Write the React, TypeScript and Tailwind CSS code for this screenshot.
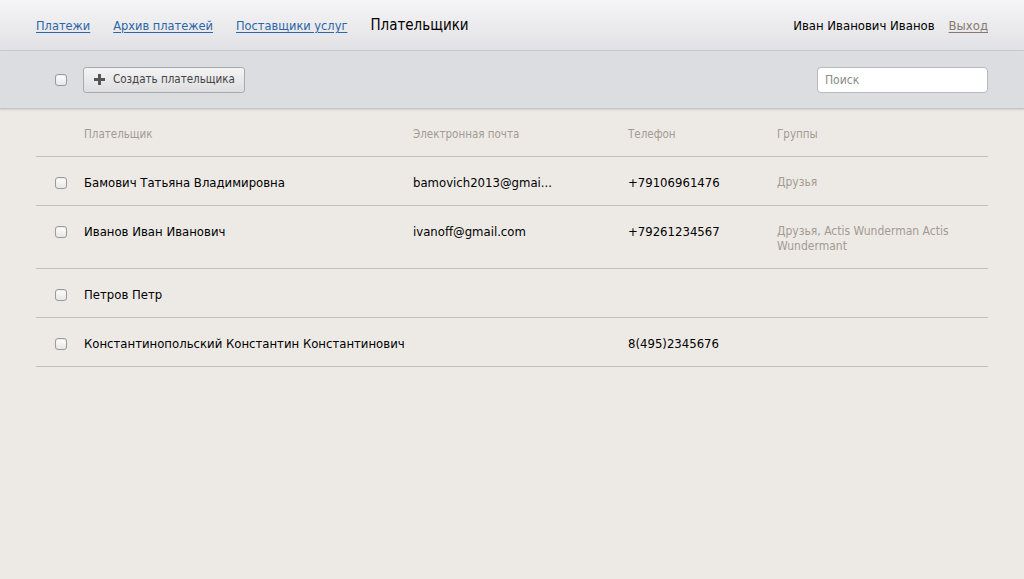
import React from 'react';

type Payer = {
  id: number;
  name: string;
  email: string;
  phone: string;
  groups: string;
};

const payers: Payer[] = [
  { id: 1, name: 'Бамович Татьяна Владимировна', email: 'bamovich2013@gmai...', phone: '+79106961476', groups: 'Друзья' },
  { id: 2, name: 'Иванов Иван Иванович', email: 'ivanoff@gmail.com', phone: '+79261234567', groups: 'Друзья, Actis Wunderman Actis Wundermant' },
  { id: 3, name: 'Петров Петр', email: '', phone: '', groups: '' },
  { id: 4, name: 'Константинопольский Константин Константинович', email: '', phone: '8(495)2345676', groups: '' },
];

function Checkbox() {
  return (
    <span className="block w-[12px] h-[12px] rounded-[3px] border border-[#9a9a9a] bg-gradient-to-b from-white to-[#e6e6e6] shadow-[inset_0_1px_1px_rgba(0,0,0,0.08)]" />
  );
}

export default function App() {
  return (
    <div className="min-h-[579px] bg-[#edeae6] font-['DejaVu_Sans_Condensed','DejaVu_Sans',sans-serif] text-[13px] text-black">
      {/* top nav */}
      <div className="h-[51px] border-b border-[#c9c9cd] bg-gradient-to-b from-[#f5f5f7] to-[#e2e2e6] px-[36px] pt-[1px] flex items-center justify-between">
        <nav className="flex items-center gap-[23px] text-[12.7px]">
          <a className="text-[#2b67a6] underline underline-offset-2">Платежи</a>
          <a className="text-[#2b67a6] underline underline-offset-2">Архив платежей</a>
          <a className="text-[#2b67a6] underline underline-offset-2">Поставщики услуг</a>
          <span className="text-[15px] text-black">Плательщики</span>
        </nav>
        <div className="flex items-center gap-[14px] text-[13px]">
          <span>Иван Иванович Иванов</span>
          <a className="text-[#867a70] underline underline-offset-2">Выход</a>
        </div>
      </div>

      {/* toolbar */}
      <div className="h-[58px] bg-[#dcdde1] border-b border-[#c4c4c8] shadow-[0_1px_2px_rgba(0,0,0,0.12)] pl-[55px] pr-[36px] flex items-center">
        <Checkbox />
        <button className="ml-[16px] h-[26px] w-[162px] pl-[10px] flex items-center gap-[8px] rounded-[3px] border border-[#a9a9ad] bg-gradient-to-b from-[#f4f4f5] to-[#dedee0] text-[11.5px] text-[#444]">
          <svg width="11" height="11" viewBox="0 0 11 11">
            <path d="M4 0h3v4h4v3H7v4H4V7H0V4h4z" fill="#555" />
          </svg>
          Создать плательщика
        </button>
        <div className="ml-auto w-[171px] h-[26px] rounded-[4px] border border-[#b9b9bd] bg-white flex items-center px-[7px] text-[12px] text-[#8a8a8a]">
          Поиск
        </div>
      </div>

      {/* table */}
      <div className="mx-[36px]">
        <div className="flex border-b border-[#c2bfbb] pt-[17px] pb-[14px] text-[11.5px] text-[#a39a91] leading-[16px]">
          <div className="w-[48px]" />
          <div className="w-[329px]">Плательщик</div>
          <div className="w-[215px]">Электронная почта</div>
          <div className="w-[149px]">Телефон</div>
          <div className="flex-1">Группы</div>
        </div>
        {payers.map((p) => (
          <div key={p.id} className="flex border-b border-[#c2bfbb] pt-[18px] pb-[14px] leading-[16px] text-[13px]">
            <div className="w-[48px] pl-[19px] pt-[2px]">
              <Checkbox />
            </div>
            <div className="w-[329px] whitespace-nowrap">{p.name}</div>
            <div className="w-[215px]">{p.email}</div>
            <div className="w-[149px]">{p.phone}</div>
            <div className="flex-1 pr-[20px] text-[12px] leading-[15px] text-[#a39a91]">{p.groups}</div>
          </div>
        ))}
      </div>
    </div>
  );
}
